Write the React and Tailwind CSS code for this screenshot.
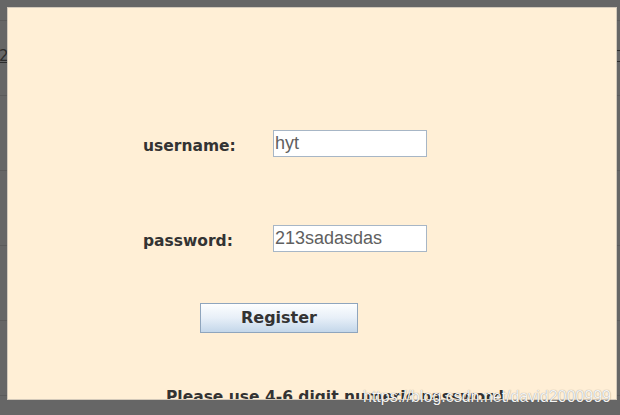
import React, { useState } from "react";

export default function App() {
  const [username, setUsername] = useState("hyt");
  const [password, setPassword] = useState("213sadasdas");

  // ---------------- BACKGROUND TABLE (dimmed) ----------------
  const BackTable = () => (
    <div className="flex flex-col">
      <div className="h-[21px] border-b border-[#5b5b5b]" />
      <div className="h-[75px] border-b border-[#5b5b5b] flex items-center justify-between">
        <span className="text-[15px] text-[#2c2c2c] underline pb-[4px] -ml-[1px]">2020</span>
        <span className="w-[8px] h-[12px] border border-[#2c2c2c] mb-[4px] -mr-[4px]" />
      </div>
      <div className="h-[75px] border-b border-[#5b5b5b]" />
      <div className="h-[75px] border-b border-[#5b5b5b]" />
      <div className="h-[75px] border-b border-[#5b5b5b]" />
      <div className="h-[75px] border-b border-[#5b5b5b]" />
    </div>
  );

  // ---------------- FIELD ROW ----------------
  const Field = ({ label, value, onChange }) => (
    <div className="flex items-center h-[27px]">
      <label className="w-[130px] pt-[6px] text-[15.5px] font-bold text-[#333333]">
        {label}
      </label>
      <input
        className="w-[154px] h-[27px] bg-white border border-[#a7b6c6] px-[1px] text-[18px] text-[#606060] outline-none"
        style={{ fontFamily: '"Liberation Sans", Arial, sans-serif' }}
        value={value}
        onChange={(e) => onChange(e.target.value)}
      />
    </div>
  );

  return (
    <div
      className="relative w-[620px] h-[415px] bg-[#666666] overflow-hidden"
      style={{ fontFamily: '"DejaVu Sans", Verdana, sans-serif' }}
    >
      <BackTable />

      {/* ---------------- DIALOG ---------------- */}
      <div className="absolute left-[7px] top-[7px] w-[610px] h-[393px] bg-[#ffefd6] border border-[#d3c9ba] overflow-hidden">
        <div className="pt-[122px] pl-[135px] flex flex-col">
          <Field label="username:" value={username} onChange={setUsername} />
          <div className="h-[68px]" />
          <Field label="password:" value={password} onChange={setPassword} />

          <button className="mt-[51px] ml-[57px] w-[158px] h-[30px] border border-[#8fa5bd] bg-gradient-to-b from-[#fdfeff] via-[#e7eff8] to-[#c4d7ea] text-[16px] font-bold text-[#333333]">
            Register
          </button>

          <div className="mt-[53px] ml-[23px] text-[15.5px] font-bold text-[#333333] whitespace-nowrap">
            Please use 4-6 digit numeric password
          </div>
        </div>
      </div>

      {/* watermark */}
      <div
        className="absolute left-[363px] top-[385px] text-[16px] text-[#f4f4f4] [text-shadow:0_0_1px_rgba(0,0,0,0.45)] whitespace-nowrap"
        style={{ fontFamily: '"Liberation Sans", Arial, sans-serif' }}
      >
        https://blog.csdn.net/david2000999
      </div>
    </div>
  );
}
